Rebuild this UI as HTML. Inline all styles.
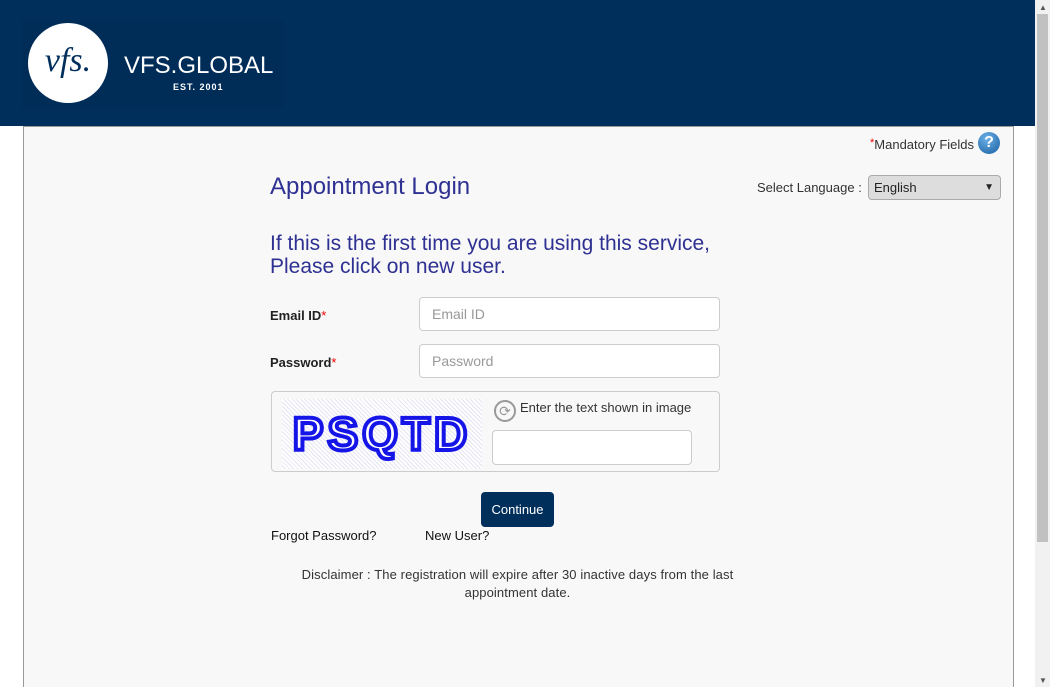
<!DOCTYPE html>
<html style="overflow:hidden;height:687px"><head><style>
body{margin:0;width:1050px;height:687px;overflow:hidden;background:#fff;font-family:"Liberation Sans",sans-serif;position:relative}
.hdr{position:absolute;left:0;top:0;width:1035px;height:126px;background:#002f5c}
.logo{position:absolute;left:22px;top:20px;width:262px;height:88px;background:#002c58}
.circ{position:absolute;left:6px;top:3px;width:80px;height:80px;border-radius:50%;background:#fff;color:#002f5c;font:italic 34px "Liberation Serif",serif;text-align:center;line-height:76px}
.brand{position:absolute;left:102px;top:32px;color:#fff;font-size:24px;letter-spacing:0px}
.est{position:absolute;left:151px;top:62px;color:#fff;font-size:9px;font-weight:bold;letter-spacing:1px}
.sb{position:absolute;left:1035px;top:0;width:15px;height:687px;background:#f1f1f1}
.thumb{position:absolute;left:1037px;top:14px;width:11px;height:528px;background:#c1c1c1}
.panel{position:absolute;left:23px;top:126px;width:989px;height:570px;border:1px solid #999;border-bottom:0;background:#f8f8f8}
.abs{position:absolute}
.lbl{font-size:13px;font-weight:bold;color:#222}
.red{color:#e00;font-weight:normal}
.inp{position:absolute;background:#fff;border:1px solid #ccc;border-radius:4px;font-size:14px;color:#999;padding-left:12px;box-sizing:border-box}
</style></head><body>
<div class="hdr"><div class="logo"><div class="circ">vfs.</div><div class="brand">VFS.GLOBAL</div><div class="est">EST. 2001</div></div></div>
<div class="panel">
<div class="abs" style="right:39px;top:10px;font-size:13px;color:#333"><span class="red" style="font-size:11px;vertical-align:top">*</span>Mandatory Fields</div>
<div class="abs" style="left:954px;top:5px;width:22px;height:22px;border-radius:50%;background:radial-gradient(circle at 40% 30%,#6ab0e8,#1a5fa0);color:#fff;font-weight:bold;font-size:16px;text-align:center;line-height:22px">?</div>
<div class="abs" style="left:246px;top:46px;font-size:24px;color:#2e3192">Appointment Login</div>
<div class="abs" style="left:733px;top:53px;font-size:13px;color:#333">Select Language :</div>
<div class="abs" style="left:844px;top:48px;width:133px;height:25px;border:1px solid #aaa;border-radius:4px;background:#ddd;font-size:13px;color:#222;line-height:23px;padding-left:5px;box-sizing:border-box">English<span style="position:absolute;right:6px;font-size:10px">▼</span></div>
<div class="abs" style="left:246px;top:105px;font-size:21px;color:#2e3192;line-height:23px">If this is the first time you are using this service,<br>Please click on new user.</div>
<div class="abs lbl" style="left:246px;top:181px">Email ID<span class="red">*</span></div>
<div class="inp" style="left:395px;top:170px;width:301px;height:34px;line-height:32px">Email ID</div>
<div class="abs lbl" style="left:246px;top:228px">Password<span class="red">*</span></div>
<div class="inp" style="left:395px;top:217px;width:301px;height:34px;line-height:32px">Password</div>
<div class="abs" style="left:247px;top:264px;width:447px;height:79px;border:1px solid #ccc;border-radius:4px"></div>
<div class="abs" style="left:258px;top:272px;width:200px;height:70px;background:repeating-linear-gradient(45deg,#fff 0 2px,#e4e4f2 2px 3px);text-align:center;font:bold 46px/70px 'Liberation Sans',sans-serif;letter-spacing:4px"><span style="color:#fff;-webkit-text-stroke:4px #1515e8">PSQTD</span></div>
<div class="abs" style="left:470px;top:273px;width:22px;height:22px;border:2px solid #999;border-radius:50%;box-sizing:border-box;color:#999;font-size:14px;text-align:center;line-height:18px">⟳</div>
<div class="abs" style="left:496px;top:273px;font-size:13px;color:#333">Enter the text shown in image</div>
<div class="inp" style="left:468px;top:303px;width:200px;height:35px"></div>
<div class="abs" style="left:457px;top:365px;width:73px;height:35px;background:#002f5c;border-radius:4px;color:#fff;font-size:13px;text-align:center;line-height:35px">Continue</div>
<div class="abs" style="left:247px;top:401px;font-size:13px;color:#111">Forgot Password?</div>
<div class="abs" style="left:401px;top:401px;font-size:13px;color:#111">New User?</div>
<div class="abs" style="left:241px;top:439px;width:505px;text-align:center;font-size:13px;color:#333;line-height:18px;letter-spacing:0.1px">Disclaimer : The registration will expire after 30 inactive days from the last appointment date.</div>
</div>
<div class="sb"></div><div class="thumb"></div>
<div style="position:absolute;left:1039px;top:3px;font-size:8px;color:#555">▲</div>
<div style="position:absolute;left:1039px;top:676px;font-size:8px;color:#555">▼</div>
</body></html>
